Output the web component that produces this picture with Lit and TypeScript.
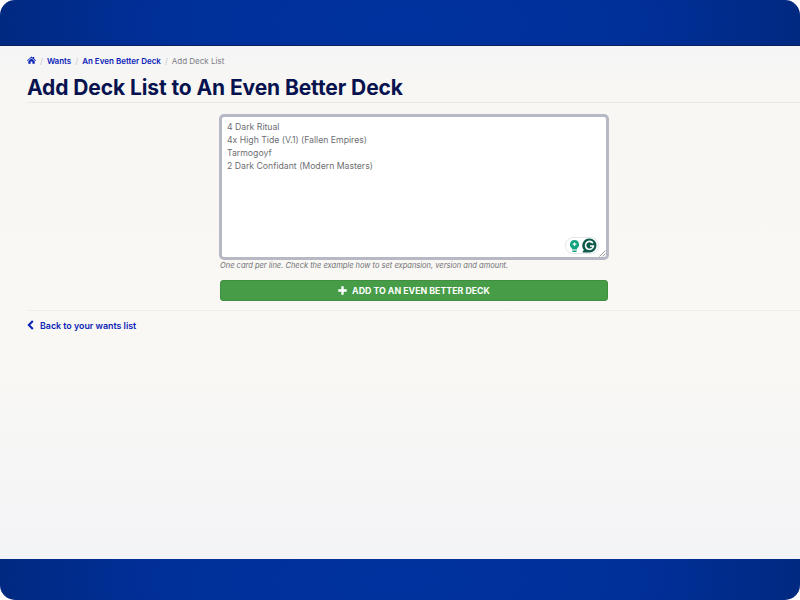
import { LitElement, html, css } from "lit";
import { customElement } from "lit/decorators.js";

@customElement("app-root")
export class AppRoot extends LitElement {
  static styles = css`
    :host { display: block; width: 800px; height: 600px; background: #fff; font-family: Inter, "Liberation Sans", sans-serif; }
    .frame { width: 800px; height: 600px; border-radius: 15px; overflow: hidden; display: flex; flex-direction: column; background: linear-gradient(180deg, #f2f3f9 0%, #f8f7f3 16%, #f9f8f4 60%, #f2f3f8 100%); }
    .bar { height: 45px; flex: none; background: radial-gradient(ellipse 560px 200px at 50% 50%, #00329f 0%, #002f98 45%, #002675 85%, #00226a 100%); }
    .bar.top { border-bottom: 1px solid #0a1f5c; }
    .bar.bottom { height: 41px; margin-top: auto; }
    main { flex: 1; display: flex; flex-direction: column; padding: 0 27px; }
    .crumbs { display: flex; align-items: center; height: 16px; margin-top: 7px; font-size: 8px; line-height: 16px; font-weight: 600; color: #0a22b8; }
    .crumbs svg { width: 9px; height: 8px; display: block; fill: #0a22b8; margin-top: -2px; }
    .sep { color: #c4c6ce; font-weight: 400; margin: 0 4px; }
    .cur { color: #7c7e85; font-weight: 400; }
    h1 { margin: 5px 0 0; font-size: 21px; line-height: 27px; font-weight: 700; letter-spacing: -0.1px; color: #07124f; }
    .rule { height: 1px; background: #e9e9ea; margin-top: 1px; margin-right: -27px; }
    .form { width: 388px; margin: 11px 0 0 193px; display: flex; flex-direction: column; }
    .area { position: relative; box-sizing: border-box; height: 146px; margin: 0 -1px; background: #fff; border: 3px solid #b6b8c4; border-radius: 5px; padding: 4px 5px; font-size: 8.7px; line-height: 13px; color: #6d6f74; }
    .area div { height: 13px; white-space: nowrap; }
    .area .gram { position: absolute; right: 7px; bottom: 3px; width: 34px; height: 17px; box-sizing: border-box; border: 1px solid #e3e5e8; border-radius: 8px; background: #fff; display: flex; align-items: center; justify-content: space-between; padding: 0 1px 0 3px; }
    .gram svg { display: block; }
    .grip { position: absolute; right: 0; bottom: 0; width: 7px; height: 7px; }
    .hint { margin-top: 0; font-size: 7.5px; line-height: 12px; font-style: italic; color: #6f7074; white-space: nowrap; }
    .btn { margin-top: 8px; height: 21px; border-radius: 3px; background: #469c47; border: 1px solid #3f8e41; box-sizing: border-box; display: flex; align-items: center; justify-content: center; gap: 5px; color: #fff; font-size: 8.8px; font-weight: 700; text-transform: uppercase; letter-spacing: 0; }
    .btn svg { width: 9px; height: 9px; fill: #fff; display: block; }
    .rule2 { height: 1px; background: #efeeeb; margin: 9px 0 0 0; margin-right: -27px; }
    .back { margin-top: 7px; display: flex; align-items: center; gap: 6px; height: 14px; font-size: 8.85px; font-weight: 600; color: #0a22b8; }
    .back svg { width: 7px; height: 10px; display: block; }
  `;

  render() {
    return html`<div class="frame">
      <div class="bar top"></div>
      <main>
        <nav class="crumbs">
          <svg viewBox="0 0 18 16"><path d="M9 1 L12 3.6 V2 H14.4 V5.7 L18 8.8 L16.8 10 L9 3.4 L1.2 10 L0 8.8 Z M9 5 L15.4 10.4 V15.5 H10.8 V11 H7.2 V15.5 H2.6 V10.4 Z"/></svg>
          <span class="sep">/</span><span>Wants</span>
          <span class="sep">/</span><span>An Even Better Deck</span>
          <span class="sep">/</span><span class="cur">Add Deck List</span>
        </nav>
        <h1>Add Deck List to An Even Better Deck</h1>
        <div class="rule"></div>
        <div class="form">
          <div class="area">
            <div>4 Dark Ritual</div>
            <div>4x High Tide (V.1) (Fallen Empires)</div>
            <div>Tarmogoyf</div>
            <div>2 Dark Confidant (Modern Masters)</div>
            <div class="gram">
              <svg width="11" height="14" viewBox="0 0 11 14"><path fill="#15a37f" d="M5.5 1a4.5 4.5 0 0 1 2.6 8.2V10.5H2.9V9.2A4.5 4.5 0 0 1 5.5 1Z"/><rect x="3.2" y="11.4" width="4.6" height="1.6" rx=".8" fill="#15a37f"/><path stroke="#fff" stroke-width="1.2" d="M5.5 3.4v3.6M3.7 5.2h3.6"/></svg>
              <svg width="15" height="15" viewBox="0 0 15 15"><path fill="#0e5a4a" d="M7.5 0.5a7 7 0 1 1 0 14H1.2c-.6 0-.8-.6-.5-1l1.2-1.5A7 7 0 0 1 7.5 0.5Z"/><path fill="none" stroke="#fff" stroke-width="1.6" d="M10.9 5.2A4 4 0 1 0 11.5 8H8"/></svg>
            </div>
            <svg class="grip" viewBox="0 0 7 7"><path stroke="#9a9a9a" stroke-width="1" d="M0.5 6.5L6.5 0.5M3.5 6.5L6.5 3.5"/></svg>
          </div>
          <div class="hint">One card per line. Check the example how to set expansion, version and amount.</div>
          <div class="btn">
            <svg viewBox="0 0 10 10"><path d="M3.7 0.3H6.3V3.7H9.7V6.3H6.3V9.7H3.7V6.3H0.3V3.7H3.7Z"/></svg>
            <span>Add to An Even Better Deck</span>
          </div>
        </div>
        <div class="rule2"></div>
        <div class="back">
          <svg viewBox="0 0 7 10"><path fill="none" stroke="#0a22b8" stroke-width="2" d="M5.8 1 L1.8 5 L5.8 9"/></svg>
          <span>Back to your wants list</span>
        </div>
      </main>
      <div class="bar bottom"></div>
    </div>`;
  }
}
